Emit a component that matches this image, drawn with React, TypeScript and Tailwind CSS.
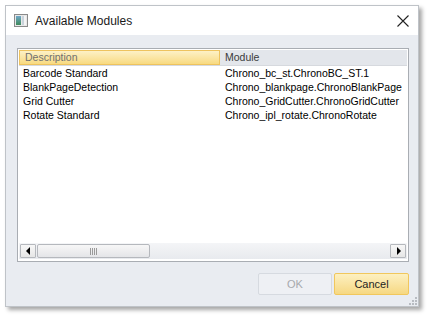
import React from "react";

const rows = [
  ["Barcode Standard", "Chrono_bc_st.ChronoBC_ST.1"],
  ["BlankPageDetection", "Chrono_blankpage.ChronoBlankPage"],
  ["Grid Cutter", "Chrono_GridCutter.ChronoGridCutter"],
  ["Rotate Standard", "Chrono_ipl_rotate.ChronoRotate"],
];

function WinIcon() {
  return (
    <svg width="14" height="13" viewBox="0 0 14 13">
      <defs>
        <linearGradient id="g1" x1="0" y1="0" x2="0" y2="1">
          <stop offset="0" stopColor="#6fa7c9" />
          <stop offset="1" stopColor="#3f8a5a" />
        </linearGradient>
      </defs>
      <rect x="0.5" y="0.5" width="13" height="12" fill="#e8e8e8" stroke="#8a8a8a" />
      <rect x="2" y="2" width="5" height="9" fill="url(#g1)" />
      <rect x="8" y="2" width="2" height="9" fill="#c9d3db" />
      <rect x="10" y="2" width="2" height="9" fill="#f4f4f4" />
    </svg>
  );
}

export default function App() {
  return (
    <div
      className="w-[429px] h-[317px] bg-white pt-[5px] pl-[5px]"
      style={{ fontFamily: '"Liberation Sans", Arial, sans-serif' }}
    >
      <div className="w-[414px] h-[302px] flex flex-col border border-[#bfc3c8] shadow-[3px_3px_4px_rgba(0,0,0,0.35)]">
        {/* title bar */}
        <div className="h-[29px] bg-white flex items-center pl-[8px] pr-[9px] shrink-0">
          <WinIcon />
          <span className="ml-[7px] text-[12px] text-[#1a1a1a] mt-[1px]">Available Modules</span>
          <div className="flex-1" />
          <svg width="12" height="12" viewBox="0 0 12 12">
            <path d="M0.5 0.5 L11.5 11.5 M11.5 0.5 L0.5 11.5" stroke="#222" strokeWidth="1.1" />
          </svg>
        </div>
        {/* content */}
        <div className="flex-1 bg-[#e9ecf1] flex flex-col pl-[11px] pr-[9px] pt-[13px] pb-[11px]">
          <div className="h-[214px] border border-[#a9adb3] bg-white flex flex-col p-[1px] text-[10.5px]">
            {/* header */}
            <div className="flex h-[16px] border-b border-[#d6d9de] shrink-0">
              <div className="w-[201px] shrink-0 h-full bg-gradient-to-b from-[#fdf1c6] to-[#f8da80] border border-[#eec35e] flex items-center pl-[5px] text-[#707070]">
                Description
              </div>
              <div className="flex-1 min-w-0 h-full bg-[#e3e6eb] flex items-center pl-[5px] text-[#3a3a3a]">
                Module
              </div>
            </div>
            {/* rows */}
            <div className="flex-1 flex flex-col pt-[1px] text-black">
              {rows.map(([d, m]) => (
                <div key={d} className="flex h-[14px] items-center">
                  <div className="w-[201px] shrink-0 pl-[4px]">{d}</div>
                  <div className="flex-1 min-w-0 overflow-hidden pl-[5px] whitespace-nowrap">{m}</div>
                </div>
              ))}
            </div>
            {/* scrollbar */}
            <div className="h-[16px] mb-[1px] flex bg-gradient-to-b from-[#f4f5f7] to-[#e8eaee] px-[1px] py-[1px] gap-[1px] shrink-0">
              <div className="w-[16px] h-full border border-[#b5b8bd] bg-gradient-to-b from-[#f7f7f7] to-[#e6e6e6] flex items-center justify-center rounded-[1px]">
                <svg width="5" height="8" viewBox="0 0 5 8">
                  <path d="M4 0 L0 4 L4 8 Z" fill="#000" />
                </svg>
              </div>
              <div className="w-[113px] h-full border border-[#b5b8bd] bg-gradient-to-b from-[#f7f7f7] to-[#e4e5e8] rounded-[2px] flex items-center justify-center">
                <svg width="7" height="7" viewBox="0 0 7 7">
                  <path d="M0.5 0 V7 M2.5 0 V7 M4.5 0 V7 M6.5 0 V7" stroke="#9a9a9a" strokeWidth="1" />
                </svg>
              </div>
              <div className="flex-1" />
              <div className="w-[16px] h-full border border-[#b5b8bd] bg-gradient-to-b from-[#f7f7f7] to-[#e6e6e6] flex items-center justify-center rounded-[1px]">
                <svg width="5" height="8" viewBox="0 0 5 8">
                  <path d="M1 0 L5 4 L1 8 Z" fill="#000" />
                </svg>
              </div>
            </div>
          </div>
          <div className="flex-1" />
          <div className="flex justify-end gap-[2px] relative">
            <div className="w-[74px] h-[22px] border border-[#d6dae0] bg-[#eef0f4] rounded-[2px] flex items-center justify-center text-[11px] text-[#a7a9ad]">
              OK
            </div>
            <div className="w-[75px] h-[22px] border border-[#f1c75c] bg-gradient-to-b from-[#fdf0c0] to-[#f6d882] rounded-[2px] flex items-center justify-center text-[11px] text-[#1e1e1e]">
              Cancel
            </div>
            <svg className="absolute right-[-8px] bottom-[-10px]" width="8" height="8" viewBox="0 0 8 8">
              <rect x="6" y="0" width="2" height="2" fill="#b8bcc2" />
              <rect x="3" y="3" width="2" height="2" fill="#b8bcc2" />
              <rect x="6" y="3" width="2" height="2" fill="#b8bcc2" />
              <rect x="0" y="6" width="2" height="2" fill="#b8bcc2" />
              <rect x="3" y="6" width="2" height="2" fill="#b8bcc2" />
              <rect x="6" y="6" width="2" height="2" fill="#b8bcc2" />
            </svg>
          </div>
        </div>
      </div>
    </div>
  );
}
